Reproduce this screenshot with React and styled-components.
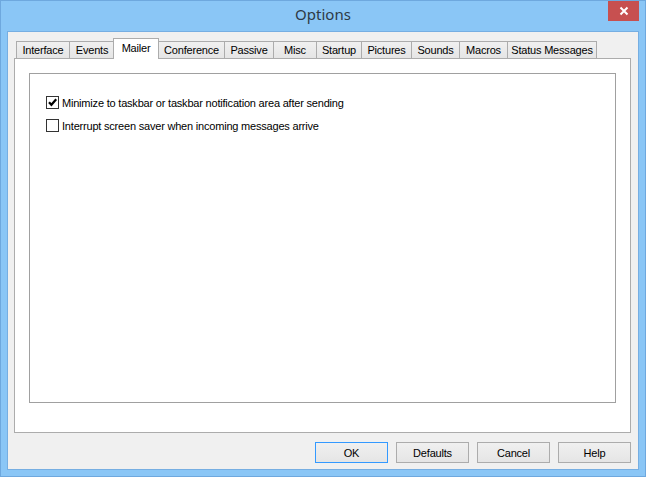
import React from "react";
import styled, { createGlobalStyle } from "styled-components";

const GlobalStyle = createGlobalStyle`
  html, body {
    margin: 0;
    padding: 0;
    background: #ffffff;
  }
  * {
    box-sizing: border-box;
  }
`;

const tabs = [
  { id: "interface", label: "Interface", width: 54 },
  { id: "events", label: "Events", width: 46 },
  { id: "mailer", label: "Mailer", width: 46 },
  { id: "conference", label: "Conference", width: 67 },
  { id: "passive", label: "Passive", width: 50 },
  { id: "misc", label: "Misc", width: 44 },
  { id: "startup", label: "Startup", width: 46 },
  { id: "pictures", label: "Pictures", width: 51 },
  { id: "sounds", label: "Sounds", width: 49 },
  { id: "macros", label: "Macros", width: 49 },
  { id: "status", label: "Status Messages", width: 90 },
];

const options = [
  { id: "minimize", label: "Minimize to taskbar or taskbar notification area after sending", checked: true },
  { id: "interrupt", label: "Interrupt screen saver when incoming messages arrive", checked: false },
];

const buttons = [
  { id: "ok", label: "OK", isDefault: true },
  { id: "defaults", label: "Defaults" },
  { id: "cancel", label: "Cancel" },
  { id: "help", label: "Help" },
];

const Window = styled.div`
  width: 646px;
  height: 477px;
  display: flex;
  flex-direction: column;
  background: #8ac6f6;
  border: 1px solid #6ea8de;
  padding: 0 6px 6px 6px;
  font-family: "Liberation Sans", Arial, sans-serif;
  font-size: 11px;
  letter-spacing: -0.2px;
  color: #000;
`;

const TitleBar = styled.div`
  height: 30px;
  display: grid;
  grid-template-columns: 1fr auto 1fr;
  align-items: center;
`;

const Title = styled.div`
  grid-column: 2;
  font-family: "Noto Sans", "Open Sans", sans-serif;
  font-size: 15px;
  letter-spacing: 0;
  color: #2e3a46;
  margin-top: -4px;
`;

const CloseButton = styled.div`
  grid-column: 3;
  justify-self: end;
  align-self: start;
  width: 31px;
  height: 20px;
  background: #c75050;
  display: flex;
  align-items: center;
  justify-content: center;
`;

const Client = styled.div`
  flex: 1;
  display: flex;
  flex-direction: column;
  background: #f0f0f0;
  border: 1px solid #76aee2;
  padding: 6px 7px 6px 6px;
`;

const TabStrip = styled.div`
  display: flex;
  align-items: flex-end;
  height: 20px;
  padding-left: 2px;
`;

const Tab = styled.div`
  position: relative;
  z-index: ${(p) => (p.$active ? 2 : 1)};
  flex: 0 0 auto;
  width: ${(p) => p.$width}px;
  height: ${(p) => (p.$active ? 21 : 17)}px;
  margin: ${(p) => (p.$active ? "0 0 -1px -2px" : "0 0 0 -1px")};
  border: 1px solid #acacac;
  border-bottom: none;
  background: ${(p) =>
    p.$active ? "#ffffff" : "linear-gradient(#f0f0f0, #e5e5e5)"};
  display: flex;
  align-items: center;
  justify-content: center;
  padding-bottom: ${(p) => (p.$active ? 3 : 0)}px;
  white-space: nowrap;

  &:first-child {
    margin-left: 0;
  }
`;

const Panel = styled.div`
  flex: 1;
  background: #ffffff;
  border: 1px solid #acacac;
  padding: 14px 14px 29px 14px;
  display: flex;
`;

const GroupBox = styled.div`
  flex: 1;
  border: 1px solid #a0a0a0;
  padding: 22px 16px;
  display: flex;
  flex-direction: column;
  gap: 10px;
`;

const CheckRow = styled.label`
  display: flex;
  align-items: center;
  gap: 3px;
  height: 13px;
  white-space: nowrap;
`;

const CheckBox = styled.span`
  width: 13px;
  height: 13px;
  border: 1px solid #333333;
  background: #ffffff;
  display: flex;
  align-items: center;
  justify-content: center;
`;

const ButtonRow = styled.div`
  display: flex;
  justify-content: flex-end;
  gap: 8px;
  margin-top: 9px;
`;

const Button = styled.div`
  width: 73px;
  height: 21px;
  border: 1px solid ${(p) => (p.$default ? "#3399ff" : "#acacac")};
  background: linear-gradient(#f0f0f0, #e5e5e5);
  display: flex;
  align-items: center;
  justify-content: center;
`;

function CheckMark() {
  return (
    <svg width="11" height="11" viewBox="0 0 11 11">
      <path d="M2 5.2 L4.4 7.8 L9.2 2.2" fill="none" stroke="#000" strokeWidth="2.2" />
    </svg>
  );
}

function CloseIcon() {
  return (
    <svg width="10" height="10" viewBox="0 0 10 10">
      <path d="M1.5 1.5 L8.5 8.5 M8.5 1.5 L1.5 8.5" stroke="#fff" strokeWidth="2" />
    </svg>
  );
}

export default function App() {
  return (
    <>
      <GlobalStyle />
      <Window>
        <TitleBar>
          <Title>Options</Title>
          <CloseButton>
            <CloseIcon />
          </CloseButton>
        </TitleBar>
        <Client>
          <TabStrip>
            {tabs.map((t) => (
              <Tab key={t.id} $width={t.width} $active={t.id === "mailer"}>
                {t.label}
              </Tab>
            ))}
          </TabStrip>
          <Panel>
            <GroupBox>
              {options.map((o) => (
                <CheckRow key={o.id}>
                  <CheckBox>{o.checked && <CheckMark />}</CheckBox>
                  {o.label}
                </CheckRow>
              ))}
            </GroupBox>
          </Panel>
          <ButtonRow>
            {buttons.map((b) => (
              <Button key={b.id} $default={b.isDefault}>
                {b.label}
              </Button>
            ))}
          </ButtonRow>
        </Client>
      </Window>
    </>
  );
}
